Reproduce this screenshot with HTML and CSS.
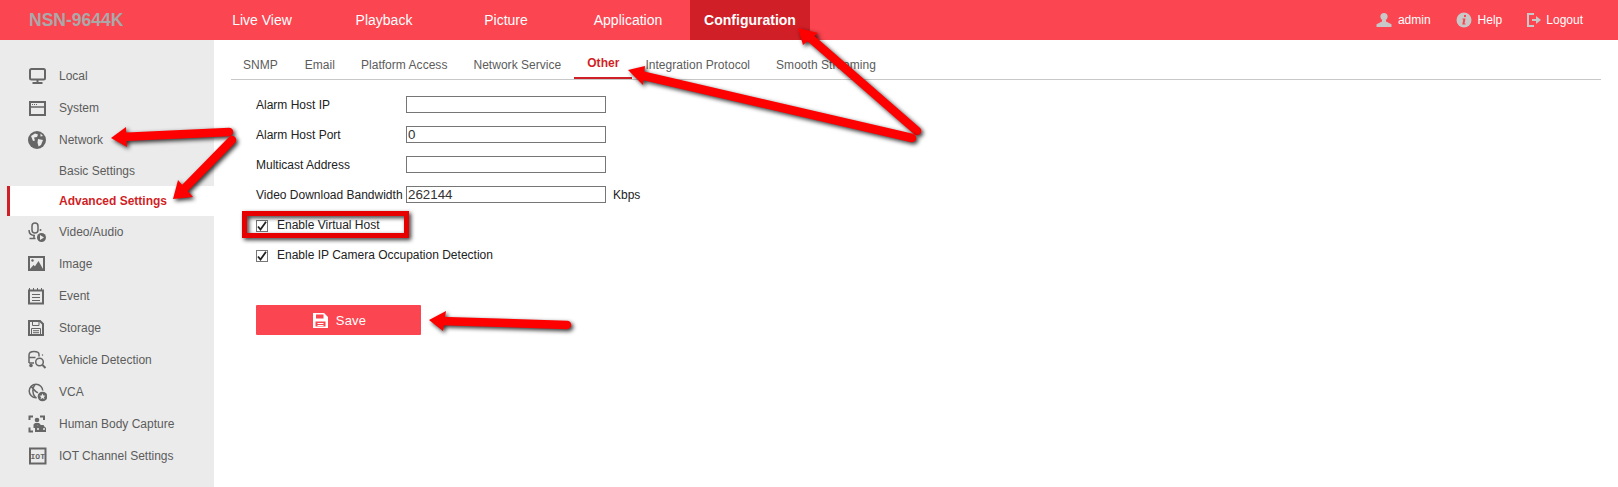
FILE: index.html
```html
<!DOCTYPE html>
<html lang="en">
<head>
    <meta charset="UTF-8">
    <title>NSN-9644K Configuration</title>
    <link rel="stylesheet" href="styles.css">
</head>
<body>
<header class="topbar">
    <div class="logo">NSN-9644K</div>
    <nav class="main-menu">
        <a href="#">Live View</a>
        <a href="#">Playback</a>
        <a href="#">Picture</a>
        <a href="#">Application</a>
        <a href="#" class="active">Configuration</a>
    </nav>
    <div class="user-menu">
        <a href="#" class="user-admin">
            <svg width="16" height="16" viewBox="0 0 16 16"><circle cx="8" cy="4.6" r="3.6"/><path d="M6 8h4v1.600l5.500 2.700V15H.5v-2.700L6 9.600z"/></svg>
            admin
        </a>
        <a href="#" class="user-help">
            <svg width="16" height="16" viewBox="0 0 16 16"><circle cx="8" cy="8" r="7.500"/><path class="cut" d="M8 3h2v2H8zM6.500 6.500h3L8.500 11.500h1v1h-3.200l1-5h-1z"/></svg>
            Help
        </a>
        <a href="#" class="user-logout">
            <svg width="14" height="16" viewBox="0 0 14 16"><path d="M0 1h7v2H2v10h5v2H0z"/><path d="M5 7h4V4l5 4-5 4V9H5z"/></svg>
            Logout
        </a>
    </div>
</header>

<div class="page">
    <aside class="sidebar">
        <ul class="side-menu">
            <li>
                <svg class="side-icon" viewBox="0 0 20 20"><rect x="3" y="3" width="15" height="10.500" rx="1.500"/><path d="M10.500 13.500v3M5.500 17h10"/></svg>
                Local
            </li>
            <li>
                <svg class="side-icon" viewBox="0 0 20 20"><rect x="3" y="4" width="15" height="13"/><path class="mid" d="M3 9h15"/><path class="thin" d="M5 6.500h5" stroke-dasharray="1 1"/></svg>
                System
            </li>
            <li>
                <svg class="side-icon" viewBox="0 0 20 20"><circle class="fill" cx="10" cy="10" r="9"/><path class="cut" d="M4 6l4-2.500 3 1-1 2.500-3 .5 1 3-2 .5zM11 9l5 1-2 5-2.500 1.500-1-4zM13.500 3.500l2.500 2.500-2.500.5z"/></svg>
                Network
            </li>
            <li class="sub">Basic Settings</li>
            <li class="sub active">Advanced Settings</li>
            <li>
                <svg class="side-icon" viewBox="0 0 20 20"><rect class="mid" x="5" y="1" width="6" height="10" rx="3"/><path class="mid" d="M2 8c0 3.500 2.500 5.500 6 5.500M7 13.500v2.500M2.500 16.500h6"/><circle class="fill" cx="13.500" cy="8" r="1"/><circle class="fill" cx="14.500" cy="15.500" r="4.500"/><path class="cut" d="M13 13l4 2.500-4 2.500z"/></svg>
                Video/Audio
            </li>
            <li>
                <svg class="side-icon" viewBox="0 0 20 20"><rect class="fill" x="1" y="2" width="17" height="15"/><rect class="cut" x="3" y="4" width="13" height="11"/><circle class="fill" cx="5.500" cy="6.500" r="1.200"/><path class="fill" d="M3 15l3.500-4 1.500 1.200 3.500-5.200 4.500 8z"/></svg>
                Image
            </li>
            <li>
                <svg class="side-icon" viewBox="0 0 20 20"><rect x="2" y="4.500" width="14" height="13"/><path class="thin" d="M5 8.500h8M5 11.500h8M5 14.500h8"/><path class="thin" d="M2.500 2v2M6.500 2v2M10.500 2v2M14.500 2v2"/></svg>
                Event
            </li>
            <li>
                <svg class="side-icon" viewBox="0 0 20 20"><path d="M2 3h11l3 3v11H2z"/><path class="thin" d="M5.500 3v4.500h6.500V3"/><path class="thin" d="M4.500 17v-6.500h9V17M6 12.700h6M6 14.700h6"/></svg>
                Storage
            </li>
            <li>
                <svg class="side-icon" viewBox="0 0 20 20"><path class="mid" d="M2 13V5c0-3 2-3.500 5-3.500s5 .5 5 3v2M2 7.500h6.500M2 13h5"/><circle class="fill" cx="4" cy="15.500" r="1.800"/><circle class="mid" cx="12.500" cy="12" r="3.800"/><path d="M15.500 15l3 3"/><circle class="fill" cx="15.500" cy="5" r=".7"/></svg>
                Vehicle Detection
            </li>
            <li>
                <svg class="side-icon" viewBox="0 0 20 20"><circle class="mid" cx="9" cy="9" r="6.800"/><path class="mid" d="M4 4c2.500 4 6 7 10 8M8 2.500C5 6 5 12 8.500 15.500"/><circle class="cut" cx="15.500" cy="14.500" r="6"/><circle class="fill" cx="15.500" cy="14.500" r="4.800"/><path class="cut" d="M15.500 11.500l.9 2 2.200.2-1.700 1.400.6 2.200-2-1.200-2 1.200.6-2.200-1.700-1.400 2.200-.2z"/></svg>
                VCA
            </li>
            <li>
                <svg class="side-icon" viewBox="0 0 20 20"><path d="M2.500 6V2.500H6M13 2.500h4V6M2.500 13.500v4H6"/><circle class="fill" cx="10" cy="6" r="2.300"/><path class="fill" d="M6.500 14v-3.500L8 9h4l1.500 1.500V11H10v3z"/><path class="fill" d="M9 13.500l1.500-2.500h6l1.500 2.500h1V18H8v-4.500z"/><circle class="cut" cx="11" cy="15" r="1"/><circle class="cut" cx="17" cy="15" r="1"/></svg>
                Human Body Capture
            </li>
            <li>
                <svg class="side-icon" viewBox="0 0 20 20"><rect x="3" y="2.500" width="15.500" height="15"/><text class="icon-label" x="10.750" y="13" text-anchor="middle">IOT</text></svg>
                IOT Channel Settings
            </li>
        </ul>
    </aside>

    <main class="content">
        <ul class="tabs">
            <li>SNMP</li>
            <li>Email</li>
            <li>Platform Access</li>
            <li>Network Service</li>
            <li class="active">Other</li>
            <li>Integration Protocol</li>
            <li>Smooth Streaming</li>
        </ul>

        <form class="settings">
            <div class="row">
                <label>Alarm Host IP</label>
                <input type="text" value="">
            </div>
            <div class="row">
                <label>Alarm Host Port</label>
                <input type="text" value="0">
            </div>
            <div class="row">
                <label>Multicast Address</label>
                <input type="text" value="">
            </div>
            <div class="row">
                <label>Video Download Bandwidth</label>
                <input type="text" value="262144">
                <span class="unit">Kbps</span>
            </div>
            <div class="row check-row">
                <span class="check"><svg width="10" height="10" viewBox="0 0 10 10"><path d="M1 5.500l2.500 3L9 .8"/></svg></span>
                Enable Virtual Host
            </div>
            <div class="row check-row">
                <span class="check"><svg width="10" height="10" viewBox="0 0 10 10"><path d="M1 5.500l2.500 3L9 .8"/></svg></span>
                Enable IP Camera Occupation Detection
            </div>
            <button type="button" class="save-btn">
                <svg width="15" height="15" viewBox="0 0 15 15"><path d="M0 0h11l4 4v11H0z"/><path class="cut" d="M3 1.500h7.500v4H3zM2.500 8.500h10v5h-10z"/><path d="M4.500 10h6v1h-6zM4.500 12h6v1h-6z"/></svg>
                Save
            </button>
        </form>
    </main>
</div>

<!-- red arrows drawn on top of the screenshot -->
<svg class="marks" width="1618" height="487" viewBox="0 0 1618 487">
    <g class="arrow">
        <path class="shaft" d="M917 131L808 36"/>
        <polygon points="798,28 818,33 803,45"/>
    </g>
    <g class="arrow">
        <path class="shaft" d="M912 138L640 75"/>
        <polygon points="628,70 645,66 643,85"/>
    </g>
    <g class="arrow">
        <path class="shaft" d="M229 132L122 137"/>
        <polygon points="111,138 126,127 127,147"/>
    </g>
    <g class="arrow">
        <path class="shaft" d="M232 140L183 190"/>
        <polygon points="173,199 178,180 193,197"/>
    </g>
    <g class="arrow">
        <path class="shaft" d="M567 325L440 321"/>
        <polygon points="429,320 446,311 443,331"/>
    </g>
    <rect class="box" x="244.500" y="213.500" width="162" height="22"/>
</svg>
</body>
</html>
```

FILE: styles.css
```css
html, body {
  margin: 0;
  padding: 0;
}

body {
  font-family: "Liberation Sans", Arial, sans-serif;
  font-size: 12px;
  color: #333;
  background: #fff;
  height: 487px;
  overflow: hidden;
  position: relative;
}

a {
  text-decoration: none;
  color: inherit;
}

ul {
  list-style: none;
  margin: 0;
  padding: 0;
}

/* top bar */
.topbar {
  display: flex;
  align-items: center;
  height: 40px;
  background: #fb4550;
  color: #fff;
}

.logo {
  width: 202px;
  box-sizing: border-box;
  padding-left: 29px;
  font-size: 17.500px;
  font-weight: bold;
  color: #a9a9a9;
}

.main-menu {
  display: flex;
  gap: 2px;
  height: 40px;
}

.main-menu a {
  width: 120px;
  line-height: 40px;
  text-align: center;
  font-size: 14px;
}

.main-menu a.active {
  background: #d01f27;
  font-weight: bold;
}

.user-menu {
  display: flex;
  align-items: center;
  margin-left: auto;
  padding-right: 35px;
  gap: 25px;
}

.user-menu a {
  display: flex;
  align-items: center;
  gap: 6px;
}

.user-menu .user-logout {
  gap: 5px;
}

.user-menu svg {
  fill: #c8c8c8;
}

.user-menu .cut {
  fill: #fb4550;
}

/* sidebar */
.page {
  display: flex;
}

.sidebar {
  width: 214px;
  height: 447px;
  padding-top: 20px;
  box-sizing: border-box;
  background: #ebebeb;
  flex: none;
}

.side-menu li {
  display: flex;
  align-items: center;
  gap: 12px;
  height: 32px;
  padding-left: 27px;
  color: #5c5c5c;
}

.side-menu li.sub {
  height: 30px;
  padding-left: 59px;
}

.side-menu li.active {
  margin-left: 7px;
  padding-left: 49px;
  background: #fff;
  border-left: 3px solid #d01f27;
  color: #d01f27;
  font-weight: bold;
}

.side-icon {
  width: 20px;
  height: 20px;
  flex: none;
  fill: none;
  stroke: #666;
  stroke-width: 2;
}

.side-icon .thin {
  stroke-width: 1;
}

.side-icon .mid {
  stroke-width: 1.500;
}

.side-icon .fill {
  fill: #666;
  stroke: none;
}

.side-icon .cut {
  fill: #ebebeb;
  stroke: none;
}

.side-icon .icon-label {
  font-family: "Liberation Mono", monospace;
  font-size: 8px;
  font-weight: bold;
  fill: #666;
  stroke: none;
}

/* tabs */
.content {
  flex: 1;
  padding: 0 17px;
}

.tabs {
  display: flex;
  height: 39px;
  border-bottom: 1px solid #c8c8c8;
  letter-spacing: 0.030px;
}

.tabs li {
  padding: 18px 13px 0;
  color: #5c5c5c;
  height: 21px;
}

.tabs li:first-child {
  padding-left: 12px;
  padding-right: 14px;
}

.tabs li.active {
  padding-top: 16px;
  height: 21px;
  border-bottom: 2px solid #d01f27;
  color: #d01f27;
  font-weight: bold;
}

/* form */
.settings {
  padding: 10px 0 0 25px;
  color: #222;
}

.row {
  display: flex;
  align-items: center;
  height: 30px;
}

.row label {
  width: 150px;
  flex: none;
}

.row input {
  width: 200px;
  height: 17px;
  box-sizing: border-box;
  padding: 0 1px;
  margin: 0 0 1px;
  border: 1px solid #767676;
  font-family: "Liberation Sans", Arial, sans-serif;
  font-size: 13.333px;
  color: #333;
}

.unit {
  margin-left: 7px;
}

.check-row {
  gap: 9px;
}

.check {
  width: 12px;
  height: 12px;
  box-sizing: border-box;
  border: 1px solid #767676;
  background: #fff;
  margin-top: 2px;
  display: flex;
  align-items: center;
  justify-content: center;
}

.check svg {
  fill: none;
  stroke: #222;
  stroke-width: 1.800;
}

.save-btn {
  display: flex;
  align-items: center;
  justify-content: center;
  gap: 8px;
  width: 165px;
  height: 30px;
  margin-top: 35px;
  padding: 0 0 0 2px;
  border: none;
  border-radius: 1px;
  background: #fb4550;
  color: #fff;
  font-family: "Liberation Sans", Arial, sans-serif;
  font-size: 13px;
  letter-spacing: 0.200px;
  cursor: pointer;
}

.save-btn svg {
  fill: #fff;
}

.save-btn .cut {
  fill: #fb4550;
}

/* annotations over the page */
.marks {
  position: absolute;
  left: 0;
  top: 0;
  pointer-events: none;
}

.arrow {
  fill: #ff0000;
  filter: drop-shadow(2px 2px 2px rgba(0, 0, 0, 0.8));
}

.shaft {
  fill: none;
  stroke: #ff0000;
  stroke-width: 8.500;
  stroke-linecap: round;
}

.box {
  fill: none;
  stroke: #e60000;
  stroke-width: 5;
  filter: drop-shadow(2px 2px 2px rgba(0, 0, 0, 0.8));
}
```
